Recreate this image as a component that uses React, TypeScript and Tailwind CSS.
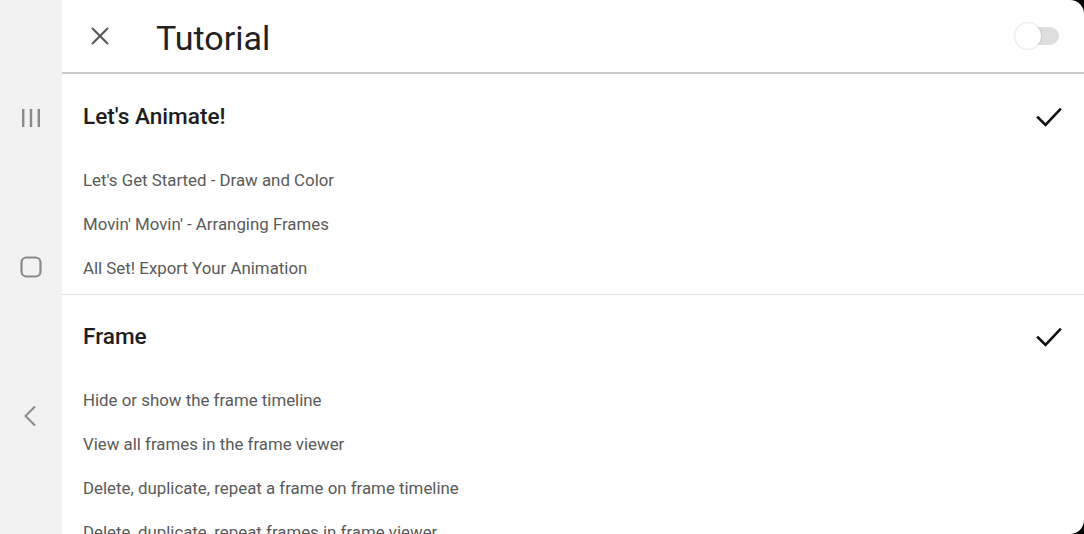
import React from "react";

const sections = [
  {
    title: "Let's Animate!",
    items: [
      "Let's Get Started - Draw and Color",
      "Movin' Movin' - Arranging Frames",
      "All Set! Export Your Animation",
    ],
  },
  {
    title: "Frame",
    items: [
      "Hide or show the frame timeline",
      "View all frames in the frame viewer",
      "Delete, duplicate, repeat a frame on frame timeline",
      "Delete, duplicate, repeat frames in frame viewer",
    ],
  },
];

function Check() {
  return (
    <svg width="26" height="24" viewBox="0 0 26 24" fill="none">
      <path d="M2 12.5 L9.5 20 L24 4.5" stroke="#111" strokeWidth="2.6" strokeLinecap="square" />
    </svg>
  );
}

function NavBar() {
  return (
    <div className="w-[62px] shrink-0 bg-[#f2f2f2] flex flex-col items-center">
      <div className="h-[236px] flex items-end pb-[108px] justify-center w-full pr-[1px]">
        <svg width="22" height="20" viewBox="0 0 22 20">
          <rect x="2" y="1" width="2.4" height="18" fill="#8a8a8a" />
          <rect x="9.8" y="1" width="2.4" height="18" fill="#8a8a8a" />
          <rect x="17.6" y="1" width="2.4" height="18" fill="#8a8a8a" />
        </svg>
      </div>
      <div className="mt-[20px] pr-[1px]">
        <svg width="22" height="22" viewBox="0 0 22 22" fill="none">
          <rect x="1.5" y="1.5" width="19" height="19" rx="5" stroke="#8a8a8a" strokeWidth="2.2" />
        </svg>
      </div>
      <div className="mt-[127px] pr-[2px]">
        <svg width="14" height="22" viewBox="0 0 14 22" fill="none">
          <path d="M12 1.5 L2.5 11 L12 20.5" stroke="#8a8a8a" strokeWidth="2" />
        </svg>
      </div>
    </div>
  );
}

export default function App() {
  return (
    <div
      className="w-[1084px] h-[534px] bg-black flex overflow-hidden"
      style={{ fontFamily: "Roboto, 'Noto Sans', sans-serif" }}
    >
      <div className="flex-1 flex bg-white rounded-tr-[14px] rounded-br-[14px] overflow-hidden">
        <NavBar />
        <div className="flex-1 flex flex-col min-w-0">
          <header className="h-[74px] shrink-0 flex items-center border-b-2 border-[#c9c9c9] pr-[25px]">
            <div className="w-[73px] flex justify-center pl-[2px]">
              <svg width="20" height="20" viewBox="0 0 20 20">
                <path d="M2 2 L18 18 M18 2 L2 18" stroke="#555" strokeWidth="2" />
              </svg>
            </div>
            <h1 className="ml-[21px] text-[34px] leading-none text-[#212121] font-normal mt-[4px]">Tutorial</h1>
            <div className="ml-auto relative w-[44px] h-[26px] flex items-center mb-[1px]">
              <div className="absolute right-0 w-[34px] h-[18px] rounded-full bg-[#dedede]" />
              <div className="absolute left-0 w-[26px] h-[26px] rounded-full bg-white shadow-[0_0_2px_rgba(0,0,0,0.25)]" />
            </div>
          </header>
          {sections.map((s, i) => (
            <section key={s.title} className={i === 0 ? "pb-[3px] border-b border-[#e2e2e2]" : ""}>
              <div className={(i === 0 ? "h-[85px] pt-[1px]" : "h-[84px]") + " flex items-center pl-[21px] pr-[22px]"}>
                <span className="text-[22.6px] font-medium text-[#1e1e1e]">{s.title}</span>
                <span className="ml-auto">
                  <Check />
                </span>
              </div>
              {s.items.map((it) => (
                <div key={it} className="h-[44px] flex items-center pl-[21px] text-[16.85px] text-[#5a5a5a]">
                  {it}
                </div>
              ))}
            </section>
          ))}
        </div>
      </div>
    </div>
  );
}
